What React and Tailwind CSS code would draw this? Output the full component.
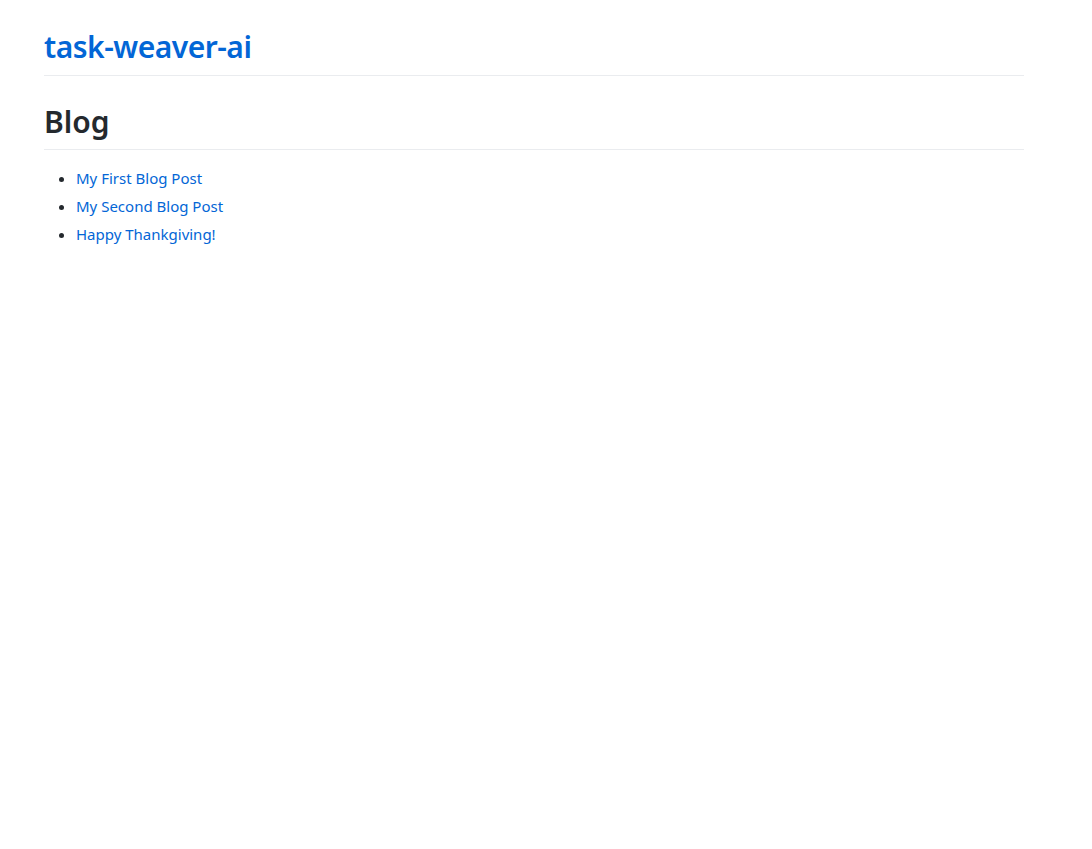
import React from 'react';

const posts = ['My First Blog Post', 'My Second Blog Post', 'Happy Thankgiving!'];

export default function App() {
  return (
    <div className="min-h-screen bg-white text-[#24292e]" style={{ fontFamily: '"Noto Sans", "Open Sans", sans-serif' }}>
      <div className="w-[980px] ml-[44px] pt-[24px]">
        <header className="border-b border-[#eaecef] pb-[5px]">
          <a href="#" className="text-[30px] font-semibold leading-[46px] tracking-[-0.5px] text-[#0366d6]">
            task-weaver-ai
          </a>
        </header>
        <h1 className="mt-[23px] text-[30px] font-semibold leading-[46px] border-b border-[#eaecef] pb-[4px]">
          Blog
        </h1>
        <ul className="list-disc pl-[32px] mt-[14px] text-[15px]">
          {posts.map((p) => (
            <li key={p} className="leading-[28px]">
              <a href="#" className="text-[#0366d6]">{p}</a>
            </li>
          ))}
        </ul>
      </div>
    </div>
  );
}
